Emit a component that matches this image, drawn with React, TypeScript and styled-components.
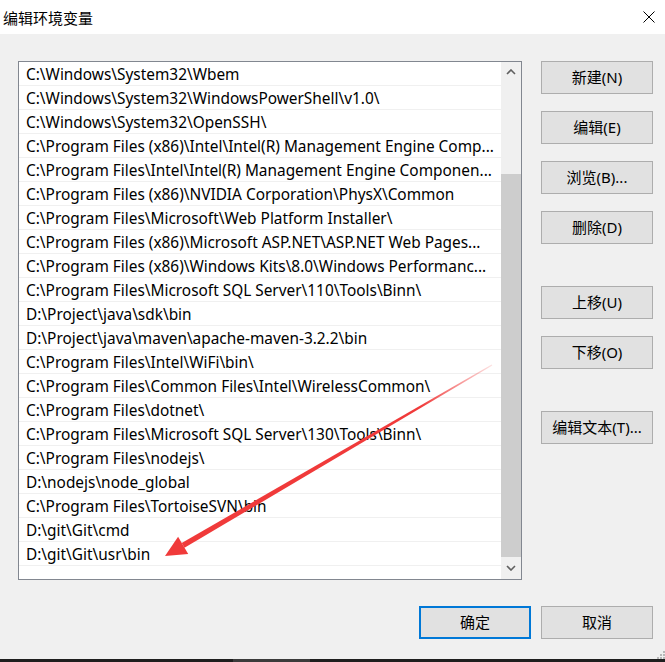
import React from 'react';
import styled, { createGlobalStyle } from 'styled-components';

const paths: string[] = [
    'C:\\Windows\\System32\\Wbem',
    'C:\\Windows\\System32\\WindowsPowerShell\\v1.0\\',
    'C:\\Windows\\System32\\OpenSSH\\',
    'C:\\Program Files (x86)\\Intel\\Intel(R) Management Engine Comp...',
    'C:\\Program Files\\Intel\\Intel(R) Management Engine Componen...',
    'C:\\Program Files (x86)\\NVIDIA Corporation\\PhysX\\Common',
    'C:\\Program Files\\Microsoft\\Web Platform Installer\\',
    'C:\\Program Files (x86)\\Microsoft ASP.NET\\ASP.NET Web Pages...',
    'C:\\Program Files (x86)\\Windows Kits\\8.0\\Windows Performanc...',
    'C:\\Program Files\\Microsoft SQL Server\\110\\Tools\\Binn\\',
    'D:\\Project\\java\\sdk\\bin',
    'D:\\Project\\java\\maven\\apache-maven-3.2.2\\bin',
    'C:\\Program Files\\Intel\\WiFi\\bin\\',
    'C:\\Program Files\\Common Files\\Intel\\WirelessCommon\\',
    'C:\\Program Files\\dotnet\\',
    'C:\\Program Files\\Microsoft SQL Server\\130\\Tools\\Binn\\',
    'C:\\Program Files\\nodejs\\',
    'D:\\nodejs\\node_global',
    'C:\\Program Files\\TortoiseSVN\\bin',
    'D:\\git\\Git\\cmd',
    'D:\\git\\Git\\usr\\bin',
];

const sideButtons = [
    { label: '新建(N)', gap: 0 },
    { label: '编辑(E)', gap: 17 },
    { label: '浏览(B)...', gap: 17 },
    { label: '删除(D)', gap: 17 },
    { label: '上移(U)', gap: 42 },
    { label: '下移(O)', gap: 17 },
    { label: '编辑文本(T)...', gap: 42 },
];

const GlobalStyle = createGlobalStyle`
    html, body {
        margin: 0;
        padding: 0;
        background: #f0f0f0;
    }
    body {
        font-family: "Noto Sans", "Noto Sans CJK SC", sans-serif;
        color: #000;
    }
`;

const Window = styled.div`
    position: relative;
    width: 665px;
    height: 662px;
    background: #f0f0f0;
    display: flex;
    flex-direction: column;
    overflow: hidden;
`;

const TitleBar = styled.div`
    height: 34px;
    flex: none;
    background: #ffffff;
    display: flex;
    align-items: center;
    justify-content: space-between;
    padding: 0 10px 0 3px;
    box-sizing: border-box;
`;

const Title = styled.span`
    font-family: "Noto Sans CJK SC", sans-serif;
    font-size: 15px;
    line-height: 1;
`;

const Body = styled.div`
    flex: 1;
    display: flex;
    flex-direction: column;
    padding: 27px 12px 0 18px;
`;

const TopRow = styled.div`
    display: flex;
    gap: 19px;
`;

const ListBox = styled.div`
    width: 504px;
    height: 519px;
    box-sizing: border-box;
    border: 1px solid #828790;
    background: #ffffff;
    display: flex;
`;

const Rows = styled.div`
    flex: 1;
    min-width: 0;
    overflow: hidden;
`;

const Row = styled.div`
    height: 24px;
    box-sizing: border-box;
    border-bottom: 1px solid #f0f0f0;
    padding: 2px 1px 0 7px;
    font-size: 15.4px;
    line-height: 22px;
    white-space: nowrap;
    overflow: hidden;
    text-overflow: ellipsis;
`;

const ScrollBar = styled.div`
    width: 20px;
    flex: none;
    background: #f0f0f0;
    display: flex;
    flex-direction: column;
`;

const ScrollArrow = styled.div<{ $grow?: boolean }>`
    height: 20px;
    flex: ${(p) => (p.$grow ? 1 : 'none')};
    display: flex;
    align-items: center;
    justify-content: center;
`;

const Thumb = styled.div<{ $offset: number; $size: number }>`
    margin-top: ${(p) => p.$offset}px;
    height: ${(p) => p.$size}px;
    background: #cdcdcd;
`;

const ButtonColumn = styled.div`
    width: 112px;
    display: flex;
    flex-direction: column;
`;

const Button = styled.button<{ $gap?: number; $primary?: boolean }>`
    width: 112px;
    height: 33px;
    margin: ${(p) => p.$gap ?? 0}px 0 0;
    padding: 0 0 1px;
    box-sizing: border-box;
    background: #e1e1e1;
    border: ${(p) => (p.$primary ? '2px solid #0078d7' : '1px solid #adadad')};
    font-family: "Noto Sans", "Noto Sans CJK SC", sans-serif;
    font-size: 15px;
    line-height: 1;
    color: #000;
    cursor: default;
`;

const BottomRow = styled.div`
    display: flex;
    justify-content: flex-end;
    gap: 10px;
    margin-top: 26px;
`;

const Taskbar = styled.div`
    margin-top: auto;
    height: 3px;
    margin-left: -18px;
    margin-right: -12px;
    background: linear-gradient(
        90deg,
        #1e1e1e 0,
        #1e1e1e 233px,
        #3b3b3b 233px,
        #3b3b3b 310px,
        #1e1e1e 310px
    );
`;

const Grip = styled.svg`
    position: absolute;
    right: 0;
    bottom: 3px;
`;

const Annotation = styled.svg`
    position: absolute;
    left: 0;
    top: 0;
    pointer-events: none;
`;

const Chevron: React.FC<{ down?: boolean }> = ({ down }) => (
    <svg width="10" height="6" viewBox="0 0 10 6">
        <path
            d={down ? 'M1 1 L5 5 L9 1' : 'M1 5 L5 1 L9 5'}
            fill="none"
            stroke="#606060"
            strokeWidth="1.6"
        />
    </svg>
);

// red arrow drawn over the list, tail near the scrollbar, tip at the last row
const Arrow = () => {
    const tail = { x: 492, y: 365 };
    const tip = { x: 165, y: 556 };
    const dx = tip.x - tail.x;
    const dy = tip.y - tail.y;
    const len = Math.hypot(dx, dy);
    const u = { x: dx / len, y: dy / len };
    const n = { x: -u.y, y: u.x };
    const headLen = 21;
    const headHalf = 10;
    const base = { x: tip.x - u.x * headLen, y: tip.y - u.y * headLen };
    const pt = (p: { x: number; y: number }, k: number) =>
        `${(p.x + n.x * k).toFixed(1)},${(p.y + n.y * k).toFixed(1)}`;
    const shaft = [pt(tail, 0.6), pt(base, 2.8), pt(base, -2.8), pt(tail, -0.6)].join(' ');
    const head = [`${tip.x},${tip.y}`, pt(base, headHalf), pt(base, -headHalf)].join(' ');

    return (
        <Annotation width="665" height="662" viewBox="0 0 665 662">
            <defs>
                <linearGradient
                    id="fade"
                    gradientUnits="userSpaceOnUse"
                    x1={tail.x}
                    y1={tail.y}
                    x2={tip.x}
                    y2={tip.y}
                >
                    <stop offset="0" stopColor="#f03a3a" stopOpacity="0.15" />
                    <stop offset="0.22" stopColor="#f03a3a" stopOpacity="1" />
                    <stop offset="1" stopColor="#f03a3a" stopOpacity="1" />
                </linearGradient>
            </defs>
            <polygon points={shaft} fill="url(#fade)" />
            <polygon points={head} fill="#f03a3a" />
        </Annotation>
    );
};

export default function App() {
    return (
        <>
            <GlobalStyle />
            <Window>
                <TitleBar>
                    <Title>编辑环境变量</Title>
                    <svg width="12" height="12" viewBox="0 0 12 12">
                        <path d="M0.5 0.5 L11.5 11.5 M11.5 0.5 L0.5 11.5" stroke="#000" strokeWidth="1" />
                    </svg>
                </TitleBar>
                <Body>
                    <TopRow>
                        <ListBox>
                            <Rows>
                                {paths.map((p) => (
                                    <Row key={p}>{p}</Row>
                                ))}
                            </Rows>
                            <ScrollBar>
                                <ScrollArrow>
                                    <Chevron />
                                </ScrollArrow>
                                <Thumb $offset={92} $size={383} />
                                <ScrollArrow $grow>
                                    <Chevron down />
                                </ScrollArrow>
                            </ScrollBar>
                        </ListBox>
                        <ButtonColumn>
                            {sideButtons.map((b) => (
                                <Button key={b.label} $gap={b.gap}>
                                    {b.label}
                                </Button>
                            ))}
                        </ButtonColumn>
                    </TopRow>
                    <BottomRow>
                        <Button $primary>确定</Button>
                        <Button>取消</Button>
                    </BottomRow>
                    <Taskbar />
                </Body>
                <Grip width="9" height="9" viewBox="0 0 9 9">
                    <rect x="7" y="1" width="2" height="2" fill="#b8b8b8" />
                    <rect x="4" y="4" width="2" height="2" fill="#b8b8b8" />
                    <rect x="7" y="4" width="2" height="2" fill="#b8b8b8" />
                    <rect x="1" y="7" width="2" height="2" fill="#b8b8b8" />
                    <rect x="4" y="7" width="2" height="2" fill="#b8b8b8" />
                    <rect x="7" y="7" width="2" height="2" fill="#b8b8b8" />
                </Grip>
                <Arrow />
            </Window>
        </>
    );
}
